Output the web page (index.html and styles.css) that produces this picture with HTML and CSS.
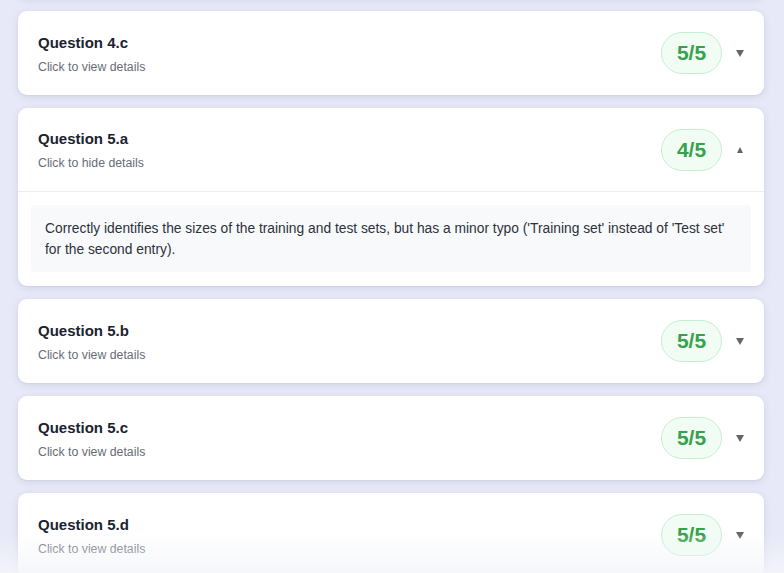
FILE: index.html
```html
<!DOCTYPE html>
<html lang="en">
<head>
<meta charset="utf-8">
<link rel="stylesheet" href="styles.css">
</head>
<body>
<div class="list">
  <div class="card card-prev"></div>
  <div class="card">
    <div class="head">
      <div class="titles"><div class="title">Question 4.c</div><div class="sub">Click to view details</div></div>
      <div class="right"><span class="badge">5/5</span><span class="toggle"><span class="arrow down"></span></span></div>
    </div>
  </div>
  <div class="card open">
    <div class="head">
      <div class="titles"><div class="title">Question 5.a</div><div class="sub">Click to hide details</div></div>
      <div class="right"><span class="badge">4/5</span><span class="toggle"><span class="arrow up"></span></span></div>
    </div>
    <div class="body">
      <div class="detail">Correctly identifies the sizes of the training and test sets, but has a minor typo ('Training set' instead of 'Test set' for the second entry).</div>
    </div>
  </div>
  <div class="card">
    <div class="head">
      <div class="titles"><div class="title">Question 5.b</div><div class="sub">Click to view details</div></div>
      <div class="right"><span class="badge">5/5</span><span class="toggle"><span class="arrow down"></span></span></div>
    </div>
  </div>
  <div class="card">
    <div class="head">
      <div class="titles"><div class="title">Question 5.c</div><div class="sub">Click to view details</div></div>
      <div class="right"><span class="badge">5/5</span><span class="toggle"><span class="arrow down"></span></span></div>
    </div>
  </div>
  <div class="card">
    <div class="head">
      <div class="titles"><div class="title">Question 5.d</div><div class="sub">Click to view details</div></div>
      <div class="right"><span class="badge">5/5</span><span class="toggle"><span class="arrow down"></span></span></div>
    </div>
  </div>
</div>
<div class="fade"></div>
</body>
</html>
```
FILE: styles.css
```css
html, body {
  margin: 0;
  padding: 0;
  height: 100%;
  overflow: hidden;
}
body {
  background: #e7e9f8;
  font-family: "Liberation Sans", Arial, sans-serif;
  color: #1f2430;
}
.list {
  display: flex;
  flex-direction: column;
  gap: 13px;
  padding: 0 20px 0 18px;
}
.card {
  background: #ffffff;
  border-radius: 9px;
  box-shadow: 0 2px 8px rgba(40, 50, 90, 0.10), 0 1px 2px rgba(40, 50, 90, 0.06);
  overflow: hidden;
}
.card-prev {
  height: 84px;
  margin-top: -86px;
}
.head {
  display: flex;
  align-items: center;
  justify-content: space-between;
  height: 84px;
  padding: 0 20px 0 20px;
  box-sizing: border-box;
}
.open .head {
  border-bottom: 1px solid #eceef2;
}
.titles {
  display: flex;
  flex-direction: column;
  gap: 8px;
  padding-top: 1px;
}
.title {
  font-size: 15px;
  font-weight: 700;
  line-height: 19px;
  color: #1c2230;
}
.sub {
  font-size: 12.3px;
  line-height: 15px;
  color: #676d78;
}
.right {
  display: flex;
  align-items: center;
  gap: 14px;
}
.badge {
  display: flex;
  align-items: center;
  justify-content: center;
  width: 59px;
  height: 40px;
  border: 1.5px solid #c6efd0;
  border-radius: 21px;
  background: #f1fdf4;
  color: #38a14c;
  font-size: 21px;
  font-weight: 700;
}
.toggle {
  display: flex;
  align-items: center;
  justify-content: center;
  width: 8px;
  height: 10px;
}
.arrow {
  width: 0;
  height: 0;
  border-left: 4px solid transparent;
  border-right: 4px solid transparent;
}
.arrow.down {
  border-top: 7px solid #62656d;
}
.arrow.up {
  border-bottom: 6px solid #62656d;
  border-left-width: 3.5px;
  border-right-width: 3.5px;
}
.body {
  padding: 13px 13px 14px 13px;
}
.detail {
  background: #f8f9fb;
  border-radius: 4px;
  padding: 13px 14px 12px 14px;
  font-size: 13.8px;
  line-height: 21px;
  color: #2d323c;
}
.fade {
  position: fixed;
  left: 0;
  right: 0;
  bottom: 0;
  height: 40px;
  background: linear-gradient(to bottom, rgba(255,255,255,0), rgba(244,245,250,0.85));
  pointer-events: none;
}
```
